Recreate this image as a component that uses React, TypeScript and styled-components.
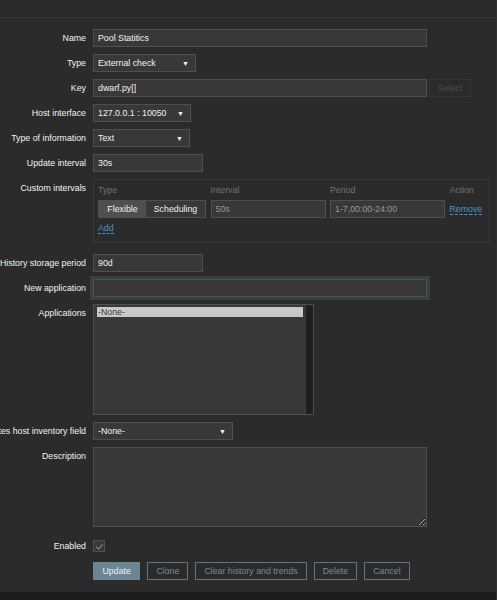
import styled, { createGlobalStyle } from "styled-components";

const GlobalStyle = createGlobalStyle`
  html, body {
    margin: 0;
    padding: 0;
    background: #2b2b2b;
    overflow: hidden;
  }
  body {
    font-family: Arial, "Liberation Sans", sans-serif;
    font-size: 8.8px;
    color: #f2f2f2;
  }
`;

function Select({ value, width }: { value: string; width: number }) {
  return (
    <SelectBox $width={width}>
      <span>{value}</span>
      <Arrow>▼</Arrow>
    </SelectBox>
  );
}

function App() {
  return (
    <Page>
      <GlobalStyle />
      <TopBar />
      <Form>
        <Label>Name</Label>
        <Field>
          <TextInput $width={334} defaultValue="Pool Statitics" />
        </Field>

        <Label>Type</Label>
        <Field>
          <Select value="External check" width={103} />
        </Field>

        <Label>Key</Label>
        <Field>
          <TextInput $width={334} defaultValue="dwarf.py[]" />
          <DisabledButton>Select</DisabledButton>
        </Field>

        <Label>Host interface</Label>
        <Field>
          <Select value="127.0.0.1 : 10050" width={98} />
        </Field>

        <Label>Type of information</Label>
        <Field>
          <Select value="Text" width={97} />
        </Field>

        <Label>Update interval</Label>
        <Field>
          <TextInput $width={110} defaultValue="30s" />
        </Field>

        <Label>Custom intervals</Label>
        <IntervalsBox>
          <IntervalsGrid>
            <HeadCell>Type</HeadCell>
            <HeadCell>Interval</HeadCell>
            <HeadCell>Period</HeadCell>
            <HeadCell>Action</HeadCell>
            <Segmented>
              <Segment $active>Flexible</Segment>
              <Segment>Scheduling</Segment>
            </Segmented>
            <TextInput $width={115} $muted defaultValue="50s" />
            <TextInput $width={115} $muted defaultValue="1-7,00:00-24:00" />
            <LinkText>Remove</LinkText>
          </IntervalsGrid>
          <AddRow>
            <LinkText>Add</LinkText>
          </AddRow>
        </IntervalsBox>

        <Label>History storage period</Label>
        <Field>
          <TextInput $width={110} defaultValue="90d" />
        </Field>

        <Label>New application</Label>
        <Field>
          <TextInput $width={334} $focused defaultValue="" />
        </Field>

        <Label>Applications</Label>
        <Field>
          <ListBox>
            <Options>
              <SelectedOption>-None-</SelectedOption>
            </Options>
            <ScrollTrack />
          </ListBox>
        </Field>

        <Label>Populates host inventory field</Label>
        <Field>
          <Select value="-None-" width={140} />
        </Field>

        <Label>Description</Label>
        <Field>
          <TextArea />
        </Field>

        <Label>Enabled</Label>
        <Field>
          <CheckBox>
            <svg width="9" height="9" viewBox="0 0 10 10">
              <path
                d="M1.5 5.2 L4 7.6 L8.6 2.6"
                fill="none"
                stroke="#6f8592"
                strokeWidth="1.4"
              />
            </svg>
          </CheckBox>
        </Field>

        <span />
        <Buttons>
          <PrimaryButton>Update</PrimaryButton>
          <OutlineButton>Clone</OutlineButton>
          <OutlineButton>Clear history and trends</OutlineButton>
          <OutlineButton>Delete</OutlineButton>
          <OutlineButton>Cancel</OutlineButton>
        </Buttons>
      </Form>
      <Footer />
    </Page>
  );
}

const Page = styled.div`
  width: 497px;
  height: 600px;
  display: flex;
  flex-direction: column;
  background: #2b2b2b;
  border-right: 1px solid #303030;
  box-sizing: border-box;
`;

const TopBar = styled.div`
  height: 17px;
  flex: none;
  border-bottom: 1px solid #383838;
`;

const Form = styled.div`
  flex: 1;
  display: grid;
  grid-template-columns: 86px 1fr;
  column-gap: 7px;
  row-gap: 7px;
  align-content: start;
  padding-top: 11px;
`;

const Label = styled.div`
  display: flex;
  justify-content: flex-end;
  white-space: nowrap;
  line-height: 18px;
  height: 18px;
  color: #f2f2f2;
  font-size: 8.8px;
`;

const Field = styled.div`
  display: flex;
  align-items: flex-start;
  gap: 2px;
  min-height: 18px;
`;

const TextInput = styled.input<{
  $width: number;
  $muted?: boolean;
  $focused?: boolean;
}>`
  box-sizing: border-box;
  width: ${({ $width }) => $width}px;
  height: 18px;
  padding: 0 4px;
  background: #383838;
  border: 1px solid #4f4f4f;
  color: ${({ $muted }) => ($muted ? "#9a9a9a" : "#f2f2f2")};
  font-family: inherit;
  font-size: 8.8px;
  outline: none;
  box-shadow: ${({ $focused }) =>
    $focused ? "0 0 0 3px #354437" : "none"};
`;

const SelectBox = styled.div<{ $width: number }>`
  box-sizing: border-box;
  width: ${({ $width }) => $width}px;
  height: 18px;
  display: flex;
  align-items: center;
  justify-content: space-between;
  padding: 0 4px;
  background: #383838;
  border: 1px solid #4f4f4f;
  color: #f2f2f2;
  font-size: 8.8px;
`;

const Arrow = styled.span`
  font-size: 7px;
  color: #f2f2f2;
  margin-right: 2px;
`;

const DisabledButton = styled.div`
  box-sizing: border-box;
  width: 42px;
  height: 18px;
  display: flex;
  align-items: center;
  justify-content: center;
  border: 1px solid #343434;
  color: #4d4d4d;
  font-size: 8.8px;
`;

const IntervalsBox = styled.div`
  box-sizing: border-box;
  width: 397px;
  border: 1px solid #383838;
  padding: 1px 4px 5px 4px;
  margin-bottom: 4px;
`;

const IntervalsGrid = styled.div`
  display: grid;
  grid-template-columns: 108px 115px 115px auto;
  column-gap: 4.5px;
  row-gap: 1px;
  align-items: center;
`;

const HeadCell = styled.div`
  line-height: 18px;
  color: #737373;
  font-size: 8.8px;
`;

const Segmented = styled.div`
  display: flex;
  height: 18px;
  box-sizing: border-box;
  border: 1px solid #4f4f4f;
`;

const Segment = styled.div<{ $active?: boolean }>`
  flex: ${({ $active }) => ($active ? "0 0 47px" : "1")};
  display: flex;
  align-items: center;
  justify-content: center;
  background: ${({ $active }) => ($active ? "#4f4f4f" : "#383838")};
  color: #f2f2f2;
  font-size: 8.8px;
`;

const LinkText = styled.span`
  color: #4796c4;
  font-size: 8.8px;
  border-bottom: 1px dashed #4796c4;
  line-height: 10px;
  justify-self: start;
`;

const AddRow = styled.div`
  height: 18px;
  display: flex;
  align-items: center;
  margin-top: 1px;
`;

const ListBox = styled.div`
  box-sizing: border-box;
  width: 221px;
  height: 111px;
  display: flex;
  background: #383838;
  border: 1px solid #4f4f4f;
  padding: 2px 0 2px 3px;
`;

const Options = styled.div`
  flex: 1;
  padding-right: 3px;
`;

const SelectedOption = styled.div`
  background: #c8c8c8;
  color: #3a3a3a;
  font-size: 8.8px;
  line-height: 10px;
  padding-left: 1px;
`;

const ScrollTrack = styled.div`
  width: 7px;
  margin: -2px 0;
  background: #1f1f1f;
`;

const TextArea = styled.textarea`
  box-sizing: border-box;
  width: 334px;
  height: 80px;
  background: #383838;
  border: 1px solid #4f4f4f;
  color: #f2f2f2;
  outline: none;
  resize: both;
  margin: 0 0 3px 0;
`;

const CheckBox = styled.div`
  box-sizing: border-box;
  width: 12px;
  height: 12px;
  margin-top: 3px;
  display: flex;
  align-items: center;
  justify-content: center;
  background: #383838;
  border: 1px solid #4f4f4f;
`;

const Buttons = styled.div`
  display: flex;
  gap: 7px;
`;

const PrimaryButton = styled.button`
  box-sizing: border-box;
  height: 18px;
  padding: 0 8.5px;
  background: #6c8594;
  border: 1px solid #6c8594;
  color: #f2f2f2;
  font-family: inherit;
  font-size: 8.8px;
`;

const OutlineButton = styled.button`
  box-sizing: border-box;
  height: 18px;
  padding: 0 8px;
  background: transparent;
  border: 1px solid #5f7480;
  color: #768d99;
  font-family: inherit;
  font-size: 8.8px;
`;

const Footer = styled.div`
  height: 8px;
  flex: none;
  background: #1c1c1c;
`;

export default App;
